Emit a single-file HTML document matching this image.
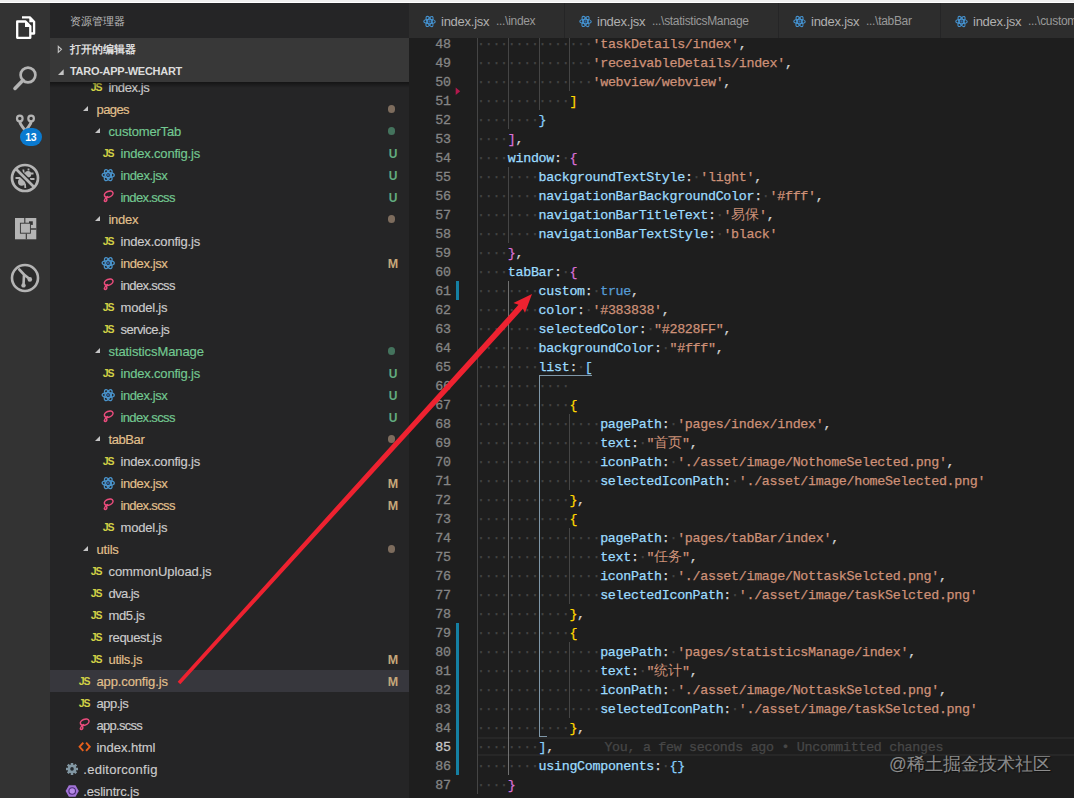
<!DOCTYPE html>
<html lang="zh">
<head>
<meta charset="utf-8">
<title>app.config.js - taro-app-wechart - Visual Studio Code</title>
<style>
*{box-sizing:border-box;margin:0;padding:0}
html,body{width:1074px;height:798px;overflow:hidden;background:#1e1e1e}
body{position:relative;font-family:"Liberation Sans",sans-serif;font-size:13px;color:#ccc}
.abs{position:absolute}
/* top strip */
#top{position:absolute;left:0;top:0;width:1074px;height:3px;background:linear-gradient(#efefef 0,#efefef 1.7px,#fff 2px,#fff 3px);z-index:50}
/* activity bar */
#act{position:absolute;left:0;top:3px;width:50px;height:795px;background:#333}
#act svg{position:absolute}
#badge{position:absolute;left:19.700px;top:124.600px;width:22.300px;height:18.900px;border-radius:9.500px;background:#0a7ad0;color:#fff;font-size:10.500px;font-weight:bold;text-align:center;line-height:19px;letter-spacing:-0.200px}
/* sidebar */
#side{position:absolute;left:50px;top:3px;width:359px;height:795px;background:#252526;overflow:hidden}
#stitle{position:absolute;left:20px;top:11px;font-size:11px;line-height:14px;color:#bbb}
.hdr{position:absolute;left:0;width:359px;height:22px;background:#383838;font-size:11px;font-weight:bold;color:#ddd;line-height:22px;z-index:5}
.hdr span.ht{position:absolute;left:20px;top:0;white-space:nowrap}
#hshadow{position:absolute;left:0;top:79px;width:359px;height:6px;background:linear-gradient(rgba(0,0,0,.45),rgba(0,0,0,0));z-index:4}
.row{position:absolute;left:0;width:359px;height:22px;line-height:22px;white-space:nowrap}
.row.sel{background:#37373d}
.row span{position:absolute;top:0}
.row .lb{top:1px}
.lb{font-size:13px;-webkit-text-stroke:0.15px}
.c-w{color:#cccccc}.c-g{color:#73c991}.c-m{color:#e2c08d}
.js{font-size:10.500px;font-weight:bold;color:#d2d246;letter-spacing:-1.150px;top:0!important;left:0.800px}
.ico{width:16px;height:22px}
.ico svg{position:absolute;left:0;top:3px;overflow:visible}
.tw{top:7.700px!important;width:0;height:0;border-style:solid;border-width:0 0 5.700px 5.700px;border-color:transparent transparent #c5c5c5 transparent}
.bd{left:336.500px;top:1px!important;font-size:12px;font-weight:bold;width:13px;text-align:center}
.bd.c-g{color:#62ab80}.bd.c-m{color:#c4a77a;font-size:12.500px}
.dot{left:337.700px;top:7px!important;width:7.600px;height:7.600px;border-radius:50%}
.dot-m{background:#7d6c5d}.dot-g{background:#44735d}
/* editor */
#tabs{position:absolute;left:409px;top:3px;width:665px;height:35px;background:#252526;z-index:6}
.tab{position:absolute;top:0;height:35px;background:#2d2d2d;line-height:35px;white-space:nowrap;color:#969696}
.tab svg{position:absolute;left:13.500px;top:12px}
.tab .n{position:absolute;left:32px;top:1px;font-size:13px;letter-spacing:-0.250px;color:#b0b0b0}
.tab .d{position:absolute;top:1px;font-size:12px;color:#999;letter-spacing:-0.300px}
#ed{position:absolute;left:409px;top:38px;width:665px;height:760px;background:#1e1e1e;overflow:hidden}
#edin{position:absolute;left:-409px;top:-38px;width:1074px;height:798px}
.ln{position:absolute;left:410px;width:40.700px;-webkit-text-stroke:0.3px;height:19px;line-height:19px;text-align:right;color:#858585;font-family:"Liberation Mono",monospace;font-size:13.333px;letter-spacing:-0.300px}
.ln.cur{color:#c6c6c6}
.cl{position:absolute;left:477px;height:19px;line-height:19px;white-space:pre;font-family:"Liberation Mono",monospace;font-size:13.333px;letter-spacing:-0.300px;color:#d4d4d4;-webkit-text-stroke:0.25px}
.cj{display:inline-block;width:14px;text-align:center;font-family:"Liberation Sans",sans-serif;font-size:14px;letter-spacing:0;line-height:0;-webkit-text-stroke:0;overflow:visible;white-space:nowrap}
.w{color:#444}
.k{color:#9cdcfe}.s{color:#ce9178}.p{color:#d4d4d4}.t{color:#569cd6}
.b1{color:#ffd700}.b2{color:#da70d6}.b3{color:#87cefa}
.blame{color:#474747;margin-left:50.400px}
.ig{position:absolute;width:1px;background:#454545}
.ig.act{background:#707070}
#curline{position:absolute;left:477px;top:736.500px;width:597px;height:19px;border-top:2px solid #272727;border-bottom:2px solid #272727}
.gm{position:absolute;left:456px;width:3.300px;background:#1580a3}
.sc{position:absolute;background:#7f97a8}
#wm{position:absolute;left:889px;top:751.500px;font-size:17.500px;line-height:24px;color:rgba(255,255,255,.5);text-shadow:1px 1px 1px rgba(0,0,0,.5);white-space:nowrap;z-index:20;letter-spacing:0}
#arrow{position:absolute;left:0;top:0;z-index:30}
</style>
</head>
<body>
<div id="top"></div>

<div id="act">
  <!-- explorer (active) -->
  <svg style="left:15px;top:12px" width="22" height="26" viewBox="0 0 22 26"><path d="M7 2.300h7.800l4.300 4.500v11.700h-3.200" fill="none" stroke="#fff" stroke-width="2.300" stroke-linejoin="round"/><path d="M14.300 1.800l5.300 5.500h-5.300z" fill="#fff"/><path d="M2.200 6.500h8.400l4.700 4.900v11.400H2.200z" fill="none" stroke="#fff" stroke-width="2.300" stroke-linejoin="round"/><path d="M10 6l5.800 6h-5.800z" fill="#fff"/></svg>
  <!-- search -->
  <svg style="left:11px;top:61px" width="28" height="28" viewBox="0 0 28 28"><circle cx="17" cy="11" r="7.400" fill="none" stroke="#b4b4b4" stroke-width="2.700"/><path d="M12 16.300 4 24.400" stroke="#b4b4b4" stroke-width="3.600" stroke-linecap="round"/></svg>
  <!-- git -->
  <svg style="left:13px;top:108px" width="26" height="26" viewBox="0 0 26 26"><g fill="none" stroke="#b4b4b4"><circle cx="6.800" cy="7.500" r="2.800" stroke-width="2.200"/><circle cx="18.100" cy="7.500" r="2.800" stroke-width="2.200"/><path d="M6.800 10.500C6.800 14 10 15.500 12 19.500M18.100 10.500C18.100 14 15 15.500 13 19.500" stroke-width="3"/></g></svg>
  <div id="badge">13</div>
  <!-- debug -->
  <svg style="left:10px;top:160px" width="30" height="30" viewBox="0 0 30 30"><circle cx="15" cy="15" r="13" fill="#2b2b2b" stroke="#b4b4b4" stroke-width="2.700"/><circle cx="11.700" cy="19" r="3.700" fill="#b4b4b4"/><circle cx="18" cy="11.200" r="3.200" fill="#b4b4b4"/><path d="M5.500 15h4.500l2 2M13.300 6.500l0.500 4 2 1.500M20 16h4.500M15 20.500l0.300 4.500M21 10.500h2.500M18.500 7.500v-2" stroke="#b4b4b4" stroke-width="1.800" fill="none"/><path d="M7.500 7.500 22.500 22.500" stroke="#2b2b2b" stroke-width="5.400"/><path d="M6 6 24 24" stroke="#b4b4b4" stroke-width="2.600"/></svg>
  <!-- extensions -->
  <svg style="left:15px;top:215px" width="22" height="22" viewBox="0 0 22 22"><rect x="0" y="0" width="21.300" height="21.300" fill="#b4b4b4"/><path d="M9.800 0V5.200M11.300 15.400V21.300" stroke="#333" stroke-width="1.100" fill="none"/><path d="M15.600 11H21.300" stroke="#333" stroke-width="1.400" fill="none"/><rect x="14" y="3.300" width="3.800" height="3.600" fill="#333"/><rect x="5.400" y="5.200" width="10" height="10" fill="#b4b4b4" stroke="#333" stroke-width="0.900"/></svg>
  <!-- gitlens -->
  <svg style="left:10px;top:260px" width="30" height="30" viewBox="0 0 30 30"><circle cx="15" cy="15" r="13" fill="#2b2b2b" stroke="#b4b4b4" stroke-width="2.600"/><path d="M9.300 6.500 14 11.500 13.500 22.400M14 11.500 19.600 16" stroke="#b4b4b4" stroke-width="2.600" stroke-linecap="round" stroke-linejoin="round" fill="none"/><circle cx="13.500" cy="22.400" r="2.200" fill="#b4b4b4"/><circle cx="19.800" cy="16.400" r="2.300" fill="#b4b4b4"/></svg>
</div>

<div id="side">
  <div id="stitle">资源管理器</div>
  <div class="hdr" style="top:35px"><svg class="abs" style="left:7px;top:6.500px" width="8" height="9" viewBox="0 0 8 9"><path d="M1.300 1.300 4.500 4.300 1.300 7.300z" fill="none" stroke="#c5c5c5" stroke-width="1.100"/></svg><span class="ht">打开的编辑器</span></div>
  <div class="hdr" style="top:57px"><svg class="abs" style="left:6.700px;top:7.500px" width="8" height="8" viewBox="0 0 8 8"><path d="M6.700 1.200V6.900H1z" fill="#c5c5c5"/></svg><span class="ht" style="letter-spacing:-0.28px">TARO-APP-WECHART</span></div>
  <div id="hshadow"></div>
  <div id="tree" style="position:absolute;left:0;top:-3px;width:359px;height:798px">
<div class="row" style="top:76px"><span class="ico" style="left:40px"><span class="js">JS</span></span><span class="lb c-w" style="left:58.5px;letter-spacing:-0.40px">index.js</span></div>
<div class="row" style="top:98px"><span class="tw" style="left:32.6px"></span><span class="lb c-m" style="left:46.5px;letter-spacing:-0.60px">pages</span><span class="dot dot-m"></span></div>
<div class="row" style="top:120px"><span class="tw" style="left:44.6px"></span><span class="lb c-g" style="left:58.5px;letter-spacing:-0.17px">customerTab</span><span class="dot dot-g"></span></div>
<div class="row" style="top:142px"><span class="ico" style="left:52px"><span class="js">JS</span></span><span class="lb c-g" style="left:70.5px;letter-spacing:-0.19px">index.config.js</span><span class="bd c-g">U</span></div>
<div class="row" style="top:164px"><span class="ico" style="left:52px"><svg class="ic" viewBox="0 0 16 16" width="16" height="16"><g fill="none" stroke="#4a94cc" stroke-width="1.3"><ellipse cx="6.2" cy="8.1" rx="6.1" ry="2.5"/><ellipse cx="6.2" cy="8.1" rx="6.1" ry="2.5" transform="rotate(60 6.2 8.1)"/><ellipse cx="6.2" cy="8.1" rx="6.1" ry="2.5" transform="rotate(120 6.2 8.1)"/></g><circle cx="6.2" cy="8.1" r="1.5" fill="#2f5f9a"/></svg></span><span class="lb c-g" style="left:70.5px;letter-spacing:-0.42px">index.jsx</span><span class="bd c-g">U</span></div>
<div class="row" style="top:186px"><span class="ico" style="left:52px"><svg class="ic" viewBox="0 0 16 16" width="16" height="16"><g fill="none" stroke="#ea4c7c" stroke-width="1.5" stroke-linecap="round"><ellipse cx="6.7" cy="5.2" rx="4.5" ry="2.9" transform="rotate(-22 6.7 5.2)"/><path d="M5.4 7.600C4.200 8.500 2.300 10 2.300 11.500c0 1.200 1.500 1.300 2.200 0.300 0.700-1 0.300-2.400-0.700-2.900"/></g></svg></span><span class="lb c-g" style="left:70.5px;letter-spacing:-0.64px">index.scss</span><span class="bd c-g">U</span></div>
<div class="row" style="top:208px"><span class="tw" style="left:44.6px"></span><span class="lb c-m" style="left:58.5px;letter-spacing:-0.29px">index</span><span class="dot dot-m"></span></div>
<div class="row" style="top:230px"><span class="ico" style="left:52px"><span class="js">JS</span></span><span class="lb c-w" style="left:70.5px;letter-spacing:-0.19px">index.config.js</span></div>
<div class="row" style="top:252px"><span class="ico" style="left:52px"><svg class="ic" viewBox="0 0 16 16" width="16" height="16"><g fill="none" stroke="#4a94cc" stroke-width="1.3"><ellipse cx="6.2" cy="8.1" rx="6.1" ry="2.5"/><ellipse cx="6.2" cy="8.1" rx="6.1" ry="2.5" transform="rotate(60 6.2 8.1)"/><ellipse cx="6.2" cy="8.1" rx="6.1" ry="2.5" transform="rotate(120 6.2 8.1)"/></g><circle cx="6.2" cy="8.1" r="1.5" fill="#2f5f9a"/></svg></span><span class="lb c-m" style="left:70.5px;letter-spacing:-0.42px">index.jsx</span><span class="bd c-m">M</span></div>
<div class="row" style="top:274px"><span class="ico" style="left:52px"><svg class="ic" viewBox="0 0 16 16" width="16" height="16"><g fill="none" stroke="#ea4c7c" stroke-width="1.5" stroke-linecap="round"><ellipse cx="6.7" cy="5.2" rx="4.5" ry="2.9" transform="rotate(-22 6.7 5.2)"/><path d="M5.4 7.600C4.200 8.500 2.300 10 2.300 11.500c0 1.200 1.500 1.300 2.200 0.300 0.700-1 0.300-2.400-0.700-2.900"/></g></svg></span><span class="lb c-w" style="left:70.5px;letter-spacing:-0.64px">index.scss</span></div>
<div class="row" style="top:296px"><span class="ico" style="left:52px"><span class="js">JS</span></span><span class="lb c-w" style="left:70.5px;letter-spacing:-0.20px">model.js</span></div>
<div class="row" style="top:318px"><span class="ico" style="left:52px"><span class="js">JS</span></span><span class="lb c-w" style="left:70.5px;letter-spacing:-0.55px">service.js</span></div>
<div class="row" style="top:340px"><span class="tw" style="left:44.6px"></span><span class="lb c-g" style="left:58.5px;letter-spacing:-0.09px">statisticsManage</span><span class="dot dot-g"></span></div>
<div class="row" style="top:362px"><span class="ico" style="left:52px"><span class="js">JS</span></span><span class="lb c-g" style="left:70.5px;letter-spacing:-0.19px">index.config.js</span><span class="bd c-g">U</span></div>
<div class="row" style="top:384px"><span class="ico" style="left:52px"><svg class="ic" viewBox="0 0 16 16" width="16" height="16"><g fill="none" stroke="#4a94cc" stroke-width="1.3"><ellipse cx="6.2" cy="8.1" rx="6.1" ry="2.5"/><ellipse cx="6.2" cy="8.1" rx="6.1" ry="2.5" transform="rotate(60 6.2 8.1)"/><ellipse cx="6.2" cy="8.1" rx="6.1" ry="2.5" transform="rotate(120 6.2 8.1)"/></g><circle cx="6.2" cy="8.1" r="1.5" fill="#2f5f9a"/></svg></span><span class="lb c-g" style="left:70.5px;letter-spacing:-0.42px">index.jsx</span><span class="bd c-g">U</span></div>
<div class="row" style="top:406px"><span class="ico" style="left:52px"><svg class="ic" viewBox="0 0 16 16" width="16" height="16"><g fill="none" stroke="#ea4c7c" stroke-width="1.5" stroke-linecap="round"><ellipse cx="6.7" cy="5.2" rx="4.5" ry="2.9" transform="rotate(-22 6.7 5.2)"/><path d="M5.4 7.600C4.200 8.500 2.300 10 2.300 11.500c0 1.200 1.500 1.300 2.200 0.300 0.700-1 0.300-2.400-0.700-2.900"/></g></svg></span><span class="lb c-g" style="left:70.5px;letter-spacing:-0.64px">index.scss</span><span class="bd c-g">U</span></div>
<div class="row" style="top:428px"><span class="tw" style="left:44.6px"></span><span class="lb c-m" style="left:58.5px;letter-spacing:-0.41px">tabBar</span><span class="dot dot-m"></span></div>
<div class="row" style="top:450px"><span class="ico" style="left:52px"><span class="js">JS</span></span><span class="lb c-w" style="left:70.5px;letter-spacing:-0.19px">index.config.js</span></div>
<div class="row" style="top:472px"><span class="ico" style="left:52px"><svg class="ic" viewBox="0 0 16 16" width="16" height="16"><g fill="none" stroke="#4a94cc" stroke-width="1.3"><ellipse cx="6.2" cy="8.1" rx="6.1" ry="2.5"/><ellipse cx="6.2" cy="8.1" rx="6.1" ry="2.5" transform="rotate(60 6.2 8.1)"/><ellipse cx="6.2" cy="8.1" rx="6.1" ry="2.5" transform="rotate(120 6.2 8.1)"/></g><circle cx="6.2" cy="8.1" r="1.5" fill="#2f5f9a"/></svg></span><span class="lb c-m" style="left:70.5px;letter-spacing:-0.42px">index.jsx</span><span class="bd c-m">M</span></div>
<div class="row" style="top:494px"><span class="ico" style="left:52px"><svg class="ic" viewBox="0 0 16 16" width="16" height="16"><g fill="none" stroke="#ea4c7c" stroke-width="1.5" stroke-linecap="round"><ellipse cx="6.7" cy="5.2" rx="4.5" ry="2.9" transform="rotate(-22 6.7 5.2)"/><path d="M5.4 7.600C4.200 8.500 2.300 10 2.300 11.500c0 1.200 1.500 1.300 2.200 0.300 0.700-1 0.300-2.400-0.700-2.900"/></g></svg></span><span class="lb c-m" style="left:70.5px;letter-spacing:-0.64px">index.scss</span><span class="bd c-m">M</span></div>
<div class="row" style="top:516px"><span class="ico" style="left:52px"><span class="js">JS</span></span><span class="lb c-w" style="left:70.5px;letter-spacing:-0.20px">model.js</span></div>
<div class="row" style="top:538px"><span class="tw" style="left:32.6px"></span><span class="lb c-m" style="left:46.5px;letter-spacing:-0.20px">utils</span><span class="dot dot-m"></span></div>
<div class="row" style="top:560px"><span class="ico" style="left:40px"><span class="js">JS</span></span><span class="lb c-w" style="left:58.5px;letter-spacing:-0.07px">commonUpload.js</span></div>
<div class="row" style="top:582px"><span class="ico" style="left:40px"><span class="js">JS</span></span><span class="lb c-w" style="left:58.5px;letter-spacing:-0.57px">dva.js</span></div>
<div class="row" style="top:604px"><span class="ico" style="left:40px"><span class="js">JS</span></span><span class="lb c-w" style="left:58.5px;letter-spacing:-0.38px">md5.js</span></div>
<div class="row" style="top:626px"><span class="ico" style="left:40px"><span class="js">JS</span></span><span class="lb c-w" style="left:58.5px;letter-spacing:-0.33px">request.js</span></div>
<div class="row" style="top:648px"><span class="ico" style="left:40px"><span class="js">JS</span></span><span class="lb c-m" style="left:58.5px;letter-spacing:-0.32px">utils.js</span><span class="bd c-m">M</span></div>
<div class="row sel" style="top:670px"><span class="ico" style="left:28px"><span class="js">JS</span></span><span class="lb c-m" style="left:46.5px;letter-spacing:-0.13px">app.config.js</span><span class="bd c-m">M</span></div>
<div class="row" style="top:692px"><span class="ico" style="left:28px"><span class="js">JS</span></span><span class="lb c-w" style="left:46.5px;letter-spacing:-0.50px">app.js</span></div>
<div class="row" style="top:714px"><span class="ico" style="left:28px"><svg class="ic" viewBox="0 0 16 16" width="16" height="16"><g fill="none" stroke="#ea4c7c" stroke-width="1.5" stroke-linecap="round"><ellipse cx="6.7" cy="5.2" rx="4.5" ry="2.9" transform="rotate(-22 6.7 5.2)"/><path d="M5.4 7.600C4.200 8.500 2.300 10 2.300 11.500c0 1.200 1.500 1.300 2.200 0.300 0.700-1 0.300-2.400-0.700-2.900"/></g></svg></span><span class="lb c-w" style="left:46.5px;letter-spacing:-0.71px">app.scss</span></div>
<div class="row" style="top:736px"><span class="ico" style="left:28px"><svg class="ic" viewBox="0 0 16 16" width="16" height="16"><path d="M5.300 3.700 1.600 7.800 5.300 11.900M8.100 3.700 11.800 7.800 8.100 11.900" fill="none" stroke="#e8601c" stroke-width="1.900"/></svg></span><span class="lb c-w" style="left:46.5px;letter-spacing:-0.04px">index.html</span></div>
<div class="row" style="top:758px"><span class="ico" style="left:16px"><svg class="ic" viewBox="0 0 16 16" width="16" height="16"><g stroke="#8297a3" stroke-width="2.500"><path d="M6 1.900v12M0 7.900h12M1.760 3.660l8.480 8.480M1.760 12.140l8.480-8.480"/></g><circle cx="6" cy="7.900" r="4.300" fill="#8297a3"/><circle cx="6" cy="7.900" r="1.800" fill="#232a30"/></svg></span><span class="lb c-w" style="left:33.3px;letter-spacing:0.27px">.editorconfig</span></div>
<div class="row" style="top:780px"><span class="ico" style="left:16px"><svg class="ic" viewBox="0 0 16 16" width="16" height="16"><path d="M-0.400 8 2.900 2.300h6.600L12.800 8 9.500 13.700H2.900z" fill="#a173d6"/><circle cx="6.200" cy="8" r="3.300" fill="#b68be6" stroke="#4a2a78" stroke-width="1.100"/></svg></span><span class="lb c-w" style="left:33.3px;letter-spacing:-0.17px">.eslintrc.js</span></div>
  </div>
</div>

<div id="tabs">
  <div class="tab" style="left:0;width:155px"><svg viewBox="0 0 16 16" width="13" height="13"><g fill="none" stroke="#4592cf" stroke-width="1.350"><ellipse cx="8" cy="8" rx="7" ry="2.700"/><ellipse cx="8" cy="8" rx="7" ry="2.700" transform="rotate(60 8 8)"/><ellipse cx="8" cy="8" rx="7" ry="2.700" transform="rotate(120 8 8)"/></g><circle cx="8" cy="8" r="1.400" fill="#2f6cb0"/></svg><span class="n">index.jsx</span><span class="d" style="left:87px">...\index</span></div>
  <div class="tab" style="left:156px;width:213px"><svg viewBox="0 0 16 16" width="13" height="13"><g fill="none" stroke="#4592cf" stroke-width="1.350"><ellipse cx="8" cy="8" rx="7" ry="2.700"/><ellipse cx="8" cy="8" rx="7" ry="2.700" transform="rotate(60 8 8)"/><ellipse cx="8" cy="8" rx="7" ry="2.700" transform="rotate(120 8 8)"/></g><circle cx="8" cy="8" r="1.400" fill="#2f6cb0"/></svg><span class="n">index.jsx</span><span class="d" style="left:87px">...\statisticsManage</span></div>
  <div class="tab" style="left:370px;width:161px"><svg viewBox="0 0 16 16" width="13" height="13"><g fill="none" stroke="#4592cf" stroke-width="1.350"><ellipse cx="8" cy="8" rx="7" ry="2.700"/><ellipse cx="8" cy="8" rx="7" ry="2.700" transform="rotate(60 8 8)"/><ellipse cx="8" cy="8" rx="7" ry="2.700" transform="rotate(120 8 8)"/></g><circle cx="8" cy="8" r="1.400" fill="#2f6cb0"/></svg><span class="n">index.jsx</span><span class="d" style="left:87px">...\tabBar</span></div>
  <div class="tab" style="left:532px;width:140px"><svg viewBox="0 0 16 16" width="13" height="13"><g fill="none" stroke="#4592cf" stroke-width="1.350"><ellipse cx="8" cy="8" rx="7" ry="2.700"/><ellipse cx="8" cy="8" rx="7" ry="2.700" transform="rotate(60 8 8)"/><ellipse cx="8" cy="8" rx="7" ry="2.700" transform="rotate(120 8 8)"/></g><circle cx="8" cy="8" r="1.400" fill="#2f6cb0"/></svg><span class="n">index.jsx</span><span class="d" style="left:87px">...\customerTab</span></div>
</div>

<div id="ed"><div id="edin">
  <div id="curline"></div>
  <svg class="abs" style="left:455px;top:87px" width="6" height="9" viewBox="0 0 6 9"><path d="M0.700 0.600 5.200 4.300 0.700 8.100z" fill="#b3184c"/></svg>
  <div class="gm" style="top:280.500px;height:19px"></div>
  <div class="gm" style="top:622.500px;height:152px"></div>
<div class="ig" style="left:477.0px;top:33.5px;height:760px"></div>
<div class="ig" style="left:507.8px;top:33.5px;height:95px"></div>
<div class="ig" style="left:507.8px;top:166.5px;height:76px"></div>
<div class="ig act" style="left:507.8px;top:280.5px;height:494px"></div>
<div class="ig" style="left:538.6px;top:33.5px;height:76px"></div>
<div class="ig" style="left:569.4px;top:33.5px;height:57px"></div>
<div class="ig" style="left:569.4px;top:413.5px;height:76px"></div>
<div class="ig" style="left:569.4px;top:527.5px;height:76px"></div>
<div class="ig" style="left:569.4px;top:641.5px;height:76px"></div>
<div class="ln" style="top:34.5px">48</div>
<div class="cl" style="top:34.5px"><span class="w">···············</span><span class="s">'taskDetails/index'</span><span class="p">,</span></div>
<div class="ln" style="top:53.5px">49</div>
<div class="cl" style="top:53.5px"><span class="w">···············</span><span class="s">'receivableDetails/index'</span><span class="p">,</span></div>
<div class="ln" style="top:72.5px">50</div>
<div class="cl" style="top:72.5px"><span class="w">···············</span><span class="s">'webview/webview'</span><span class="p">,</span></div>
<div class="ln" style="top:91.5px">51</div>
<div class="cl" style="top:91.5px"><span class="w">············</span><span class="b1">]</span></div>
<div class="ln" style="top:110.5px">52</div>
<div class="cl" style="top:110.5px"><span class="w">········</span><span class="b3">}</span></div>
<div class="ln" style="top:129.5px">53</div>
<div class="cl" style="top:129.5px"><span class="w">····</span><span class="b2">]</span><span class="p">,</span></div>
<div class="ln" style="top:148.5px">54</div>
<div class="cl" style="top:148.5px"><span class="w">····</span><span class="k">window</span><span class="p">:</span><span class="w">·</span><span class="b2">{</span></div>
<div class="ln" style="top:167.5px">55</div>
<div class="cl" style="top:167.5px"><span class="w">········</span><span class="k">backgroundTextStyle</span><span class="p">:</span><span class="w">·</span><span class="s">'light'</span><span class="p">,</span></div>
<div class="ln" style="top:186.5px">56</div>
<div class="cl" style="top:186.5px"><span class="w">········</span><span class="k">navigationBarBackgroundColor</span><span class="p">:</span><span class="w">·</span><span class="s">'#fff'</span><span class="p">,</span></div>
<div class="ln" style="top:205.5px">57</div>
<div class="cl" style="top:205.5px"><span class="w">········</span><span class="k">navigationBarTitleText</span><span class="p">:</span><span class="w">·</span><span class="s">'<span class="cj">易</span><span class="cj">保</span>'</span><span class="p">,</span></div>
<div class="ln" style="top:224.5px">58</div>
<div class="cl" style="top:224.5px"><span class="w">········</span><span class="k">navigationBarTextStyle</span><span class="p">:</span><span class="w">·</span><span class="s">'black'</span></div>
<div class="ln" style="top:243.5px">59</div>
<div class="cl" style="top:243.5px"><span class="w">····</span><span class="b2">}</span><span class="p">,</span></div>
<div class="ln" style="top:262.5px">60</div>
<div class="cl" style="top:262.5px"><span class="w">····</span><span class="k">tabBar</span><span class="p">:</span><span class="w">·</span><span class="b2">{</span></div>
<div class="ln" style="top:281.5px">61</div>
<div class="cl" style="top:281.5px"><span class="w">········</span><span class="k">custom</span><span class="p">:</span><span class="w">·</span><span class="t">true</span><span class="p">,</span></div>
<div class="ln" style="top:300.5px">62</div>
<div class="cl" style="top:300.5px"><span class="w">········</span><span class="k">color</span><span class="p">:</span><span class="w">·</span><span class="s">'#383838'</span><span class="p">,</span></div>
<div class="ln" style="top:319.5px">63</div>
<div class="cl" style="top:319.5px"><span class="w">········</span><span class="k">selectedColor</span><span class="p">:</span><span class="w">·</span><span class="s">"#2828FF"</span><span class="p">,</span></div>
<div class="ln" style="top:338.5px">64</div>
<div class="cl" style="top:338.5px"><span class="w">········</span><span class="k">backgroundColor</span><span class="p">:</span><span class="w">·</span><span class="s">"#fff"</span><span class="p">,</span></div>
<div class="ln" style="top:357.5px">65</div>
<div class="cl" style="top:357.5px"><span class="w">········</span><span class="k">list</span><span class="p">:</span><span class="w">·</span><span class="b3">[</span></div>
<div class="ln" style="top:376.5px">66</div>
<div class="cl" style="top:376.5px"><span class="w">············</span></div>
<div class="ln" style="top:395.5px">67</div>
<div class="cl" style="top:395.5px"><span class="w">············</span><span class="b1">{</span></div>
<div class="ln" style="top:414.5px">68</div>
<div class="cl" style="top:414.5px"><span class="w">················</span><span class="k">pagePath</span><span class="p">:</span><span class="w">·</span><span class="s">'pages/index/index'</span><span class="p">,</span></div>
<div class="ln" style="top:433.5px">69</div>
<div class="cl" style="top:433.5px"><span class="w">················</span><span class="k">text</span><span class="p">:</span><span class="w">·</span><span class="s">"<span class="cj">首</span><span class="cj">页</span>"</span><span class="p">,</span></div>
<div class="ln" style="top:452.5px">70</div>
<div class="cl" style="top:452.5px"><span class="w">················</span><span class="k">iconPath</span><span class="p">:</span><span class="w">·</span><span class="s">'./asset/image/NothomeSelected.png'</span><span class="p">,</span></div>
<div class="ln" style="top:471.5px">71</div>
<div class="cl" style="top:471.5px"><span class="w">················</span><span class="k">selectedIconPath</span><span class="p">:</span><span class="w">·</span><span class="s">'./asset/image/homeSelected.png'</span></div>
<div class="ln" style="top:490.5px">72</div>
<div class="cl" style="top:490.5px"><span class="w">············</span><span class="b1">}</span><span class="p">,</span></div>
<div class="ln" style="top:509.5px">73</div>
<div class="cl" style="top:509.5px"><span class="w">············</span><span class="b1">{</span></div>
<div class="ln" style="top:528.5px">74</div>
<div class="cl" style="top:528.5px"><span class="w">················</span><span class="k">pagePath</span><span class="p">:</span><span class="w">·</span><span class="s">'pages/tabBar/index'</span><span class="p">,</span></div>
<div class="ln" style="top:547.5px">75</div>
<div class="cl" style="top:547.5px"><span class="w">················</span><span class="k">text</span><span class="p">:</span><span class="w">·</span><span class="s">"<span class="cj">任</span><span class="cj">务</span>"</span><span class="p">,</span></div>
<div class="ln" style="top:566.5px">76</div>
<div class="cl" style="top:566.5px"><span class="w">················</span><span class="k">iconPath</span><span class="p">:</span><span class="w">·</span><span class="s">'./asset/image/NottaskSelcted.png'</span><span class="p">,</span></div>
<div class="ln" style="top:585.5px">77</div>
<div class="cl" style="top:585.5px"><span class="w">················</span><span class="k">selectedIconPath</span><span class="p">:</span><span class="w">·</span><span class="s">'./asset/image/taskSelcted.png'</span></div>
<div class="ln" style="top:604.5px">78</div>
<div class="cl" style="top:604.5px"><span class="w">············</span><span class="b1">}</span><span class="p">,</span></div>
<div class="ln" style="top:623.5px">79</div>
<div class="cl" style="top:623.5px"><span class="w">············</span><span class="b1">{</span></div>
<div class="ln" style="top:642.5px">80</div>
<div class="cl" style="top:642.5px"><span class="w">················</span><span class="k">pagePath</span><span class="p">:</span><span class="w">·</span><span class="s">'pages/statisticsManage/index'</span><span class="p">,</span></div>
<div class="ln" style="top:661.5px">81</div>
<div class="cl" style="top:661.5px"><span class="w">················</span><span class="k">text</span><span class="p">:</span><span class="w">·</span><span class="s">"<span class="cj">统</span><span class="cj">计</span>"</span><span class="p">,</span></div>
<div class="ln" style="top:680.5px">82</div>
<div class="cl" style="top:680.5px"><span class="w">················</span><span class="k">iconPath</span><span class="p">:</span><span class="w">·</span><span class="s">'./asset/image/NottaskSelcted.png'</span><span class="p">,</span></div>
<div class="ln" style="top:699.5px">83</div>
<div class="cl" style="top:699.5px"><span class="w">················</span><span class="k">selectedIconPath</span><span class="p">:</span><span class="w">·</span><span class="s">'./asset/image/taskSelcted.png'</span></div>
<div class="ln" style="top:718.5px">84</div>
<div class="cl" style="top:718.5px"><span class="w">············</span><span class="b1">}</span><span class="p">,</span></div>
<div class="ln cur" style="top:737.5px">85</div>
<div class="cl" style="top:737.5px"><span class="w">········</span><span class="b3">]</span><span class="p">,</span><span class="blame">You, a few seconds ago • Uncommitted changes</span></div>
<div class="ln" style="top:756.5px">86</div>
<div class="cl" style="top:756.5px"><span class="w">········</span><span class="k">usingComponents</span><span class="p">:</span><span class="w">·</span><span class="b3">{}</span></div>
<div class="ln" style="top:775.5px">87</div>
<div class="cl" style="top:775.5px"><span class="w">····</span><span class="b2">}</span></div>
  <div class="sc" style="left:539px;top:375px;width:53px;height:1px"></div>
  <div class="sc" style="left:539px;top:375px;width:1px;height:361px"></div>
  <div class="sc" style="left:539px;top:736px;width:8px;height:1px"></div>
</div></div>

<div id="wm">@稀土掘金技术社区</div>

<svg id="arrow" width="1074" height="798" viewBox="0 0 1074 798"><path d="M177.700 681.800 518.500 304.800 513.400 303.100 532 294.100 525 312.700 522.900 308.800 180.300 684.200z" fill="#ee2230"/></svg>
</body>
</html>
